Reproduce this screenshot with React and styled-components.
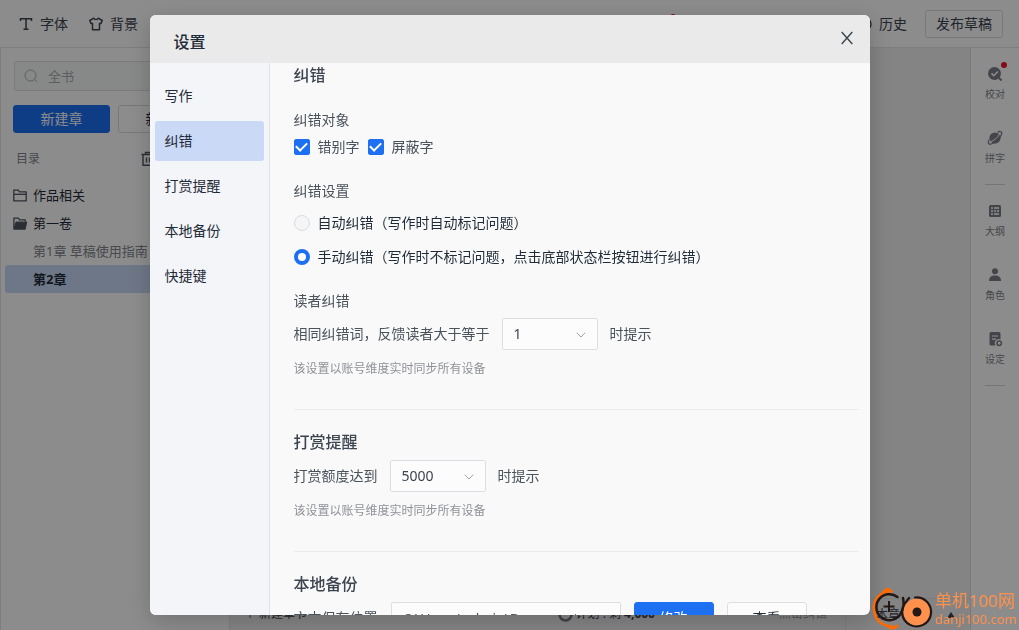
import React from 'react';
import styled, { createGlobalStyle } from 'styled-components';

const GlobalStyle = createGlobalStyle`
    * { box-sizing: border-box; }
    body {
        margin: 0;
        font-family: "Noto Sans", "Noto Sans CJK SC", sans-serif;
        font-size: 14px;
        line-height: 20px;
        color: #1f2b38;
        overflow: hidden;
    }
    button, input, select { font: inherit; color: inherit; margin: 0; }
    h1, h2, h3, p { margin: 0; }
`

const TrashIcon = () => (
    <svg width="14" height="16" viewBox="0 0 14 16" fill="none" stroke="currentColor" strokeWidth="1.4">
        <path d="M.5 3.5h13M4.500 3.5V1.5h5v2M2 3.5V14.3h10V3.5M5.500 6.5v5M8.500 6.5v5" />
    </svg>
)

const FolderIcon = ({ open }) => (
    <svg width="14" height="13" viewBox="0 0 14 13" fill="none" stroke="currentColor" strokeWidth="1.3" strokeLinejoin="round">
        {open
            ? <><path d="M.9 11.5V1.2h4.4l1.3 1.7h5.6v1.6" /><path d="M.9 12 3.2 5.2h10.4L12 12Z" fill="currentColor" /></>
            : <><path d="M.8 1.2h4.4l1.3 1.7h6.7v9H.8Z" /><path d="M.8 5.3h12.4" /></>}
    </svg>
)

const CheckLensIcon = () => (
    <svg width="18" height="18" viewBox="0 0 18 18" fill="currentColor">
        <circle cx="8.5" cy="8.5" r="6.5" />
        <path d="m12.5 12.5 3 3" stroke="currentColor" strokeWidth="2" />
        <path d="m5.5 8.4 2.3 2.3 4-4.2" fill="none" stroke="#fff" strokeWidth="1.6" />
    </svg>
)

const PlanetIcon = () => (
    <svg width="18" height="18" viewBox="0 0 18 18" fill="none" stroke="currentColor" strokeWidth="1.3">
        <circle cx="9" cy="9" r="5.6" fill="currentColor" stroke="none" />
        <path d="M3.2 10.5C1.6 13 2 15.5 4.5 15.2 8.5 14.6 15.6 8 15.8 3.8 15.6 2 13 2.4 11.5 3.2" />
        <path d="M4.5 12.5C8 11.8 12.5 8 13.6 4.8" stroke="#fff" strokeWidth="1" />
    </svg>
)

const TableIcon = () => (
    <svg width="18" height="18" viewBox="0 0 18 18">
        <rect x="3" y="3" width="12" height="12" rx="1.5" fill="currentColor" />
        <path d="M5 5h2v2H5ZM8 5h5v2H8ZM5 8h2v2H5ZM8 8h2v2H8ZM11 8h2v2h-2ZM5 11h2v2H5ZM8 11h5v2H8Z" fill="#fff" fillOpacity=".8" />
    </svg>
)

const PersonIcon = () => (
    <svg width="18" height="18" viewBox="0 0 18 18" fill="currentColor">
        <circle cx="9" cy="5.3" r="3" />
        <path d="M3 15c0-4 2.5-5.5 6-5.5s6 1.5 6 5.5Z" />
    </svg>
)

const DocIcon = () => (
    <svg width="18" height="18" viewBox="0 0 18 18">
        <path d="M5 2h8a1.5 1.5 0 0 1 1.5 1.5V9.5A4 4 0 0 0 9.6 15.5H5A1.5 1.5 0 0 1 3.5 14V3.5A1.5 1.5 0 0 1 5 2Z" fill="currentColor" />
        <path d="M6 6h6M6 9.2h4" stroke="#fff" strokeWidth="1.2" />
        <circle cx="13.2" cy="13.2" r="2.2" fill="none" stroke="currentColor" strokeWidth="1.5" />
    </svg>
)

const chapters = [
    { name: '作品相关', icon: <FolderIcon /> },
    { name: '第一卷', icon: <FolderIcon open /> },
    { name: '第1章 草稿使用指南', muted: true },
    { name: '第2章', active: true },
]

const tools = [
    { name: '校对', icon: <CheckLensIcon />, dot: true },
    { name: '拼字', icon: <PlanetIcon />, divider: true },
    { name: '大纲', icon: <TableIcon /> },
    { name: '角色', icon: <PersonIcon /> },
    { name: '设定', icon: <DocIcon />, divider: true },
]

const tabs = ['写作', '纠错', '打赏提醒', '本地备份', '快捷键']

function Editor() {
    return (
        <Page>
            <TopBar>
                <ToolButton>
                    <svg width="14" height="14" viewBox="0 0 14 14" fill="none" stroke="currentColor" strokeWidth="1.5">
                        <path d="M1.5 4V1.7h11V4M7 1.7v10.6M4.5 12.3h5" />
                    </svg>
                    字体
                </ToolButton>
                <ToolButton>
                    <svg width="14" height="14" viewBox="0 0 14 14" fill="none" stroke="currentColor" strokeWidth="1.5" strokeLinejoin="round">
                        <path d="M4.8 1.2C5.5 3 8.5 3 9.2 1.2L13.2 3.5 12 6.5H10.5V12.8H3.5V6.5H2L.8 3.5Z" />
                    </svg>
                    背景
                </ToolButton>
                <BarEnd>
                    <NoticeButton aria-label="消息"><Dot /></NoticeButton>
                    <ToolButton>
                        <svg width="14" height="14" viewBox="0 0 14 14" fill="none" stroke="currentColor" strokeWidth="1.4">
                            <circle cx="7" cy="7" r="6" />
                            <path d="M7 3.5V7.5h3" />
                        </svg>
                        历史
                    </ToolButton>
                    <PublishButton>发布草稿</PublishButton>
                </BarEnd>
            </TopBar>
            <Body>
                <Sidebar>
                    <SearchBox>
                        <svg width="14" height="14" viewBox="0 0 14 14" fill="none" stroke="currentColor">
                            <circle cx="6.5" cy="6.5" r="5.5" />
                            <path d="m10.5 10.5 2.5 2.5" />
                        </svg>
                        <SearchInput aria-label="搜索" placeholder="全书" />
                    </SearchBox>
                    <ButtonPair>
                        <NewButton $primary>新建章</NewButton>
                        <NewButton>新建卷</NewButton>
                    </ButtonPair>
                    <ListHead>
                        目录
                        <TrashButton aria-label="回收站"><TrashIcon /></TrashButton>
                    </ListHead>
                    <Tree>
                        {chapters.map(c => (
                            <TreeItem key={c.name} $active={c.active} $muted={c.muted}>
                                <TreeIcon>{c.icon}</TreeIcon>
                                {c.name}
                            </TreeItem>
                        ))}
                    </Tree>
                </Sidebar>
                <Center>
                    <Canvas />
                    <StatusBar>
                        <span>＋ 新建章节</span>
                        <Plan>
                            <svg width="15" height="15" viewBox="0 0 15 15" fill="none" stroke="#777b84" strokeWidth="2.5">
                                <circle cx="7.5" cy="7.5" r="6" />
                            </svg>
                            <span>计划 : 剩 <b>4,000</b></span>
                        </Plan>
                        <Faint>点击纠错</Faint>
                        <WordCount>
                            本章
                            <svg width="8" height="6" viewBox="0 0 8 6" fill="currentColor"><path d="M4 0l4 6H0Z" /></svg>
                        </WordCount>
                    </StatusBar>
                </Center>
                <Rail>
                    {tools.map(t => (
                        <React.Fragment key={t.name}>
                            <RailButton>
                                <RailIcon>{t.icon}{t.dot && <Dot />}</RailIcon>
                                {t.name}
                            </RailButton>
                            {t.divider && <RailLine />}
                        </React.Fragment>
                    ))}
                </Rail>
            </Body>
        </Page>
    )
}

function SettingsDialog() {
    return (
        <Dialog role="dialog" aria-labelledby="dialog-title">
            <DialogHead>
                <Title id="dialog-title">设置</Title>
                <CloseButton aria-label="关闭">
                    <svg width="12" height="14" viewBox="0 0 12 14" fill="none" stroke="currentColor" strokeWidth="1.4">
                        <path d="M.7 1 11.3 13M11.3 1 .7 13" />
                    </svg>
                </CloseButton>
            </DialogHead>
            <DialogBody>
                <TabList>
                    {tabs.map(t => <Tab key={t} $active={t === '纠错'}>{t}</Tab>)}
                </TabList>
                <Pane>
                    <Section $first>
                        <Heading>纠错</Heading>
                        <Group>
                            <SubHeading>纠错对象</SubHeading>
                            <Checks>
                                <Option><Check type="checkbox" defaultChecked />错别字</Option>
                                <Option><Check type="checkbox" defaultChecked />屏蔽字</Option>
                            </Checks>
                        </Group>
                        <Group>
                            <SubHeading>纠错设置</SubHeading>
                            <Radios>
                                <Option $dark><Radio type="radio" name="mode" />自动纠错（写作时自动标记问题）</Option>
                                <Option $dark><Radio type="radio" name="mode" defaultChecked />手动纠错（写作时不标记问题，点击底部状态栏按钮进行纠错）</Option>
                            </Radios>
                        </Group>
                        <Group>
                            <SubHeading>读者纠错</SubHeading>
                            <Row>
                                <label htmlFor="readers">相同纠错词，反馈读者大于等于</label>
                                <NumberSelect id="readers" options={['1', '2', '3']} />
                                <span>时提示</span>
                            </Row>
                            <Hint>该设置以账号维度实时同步所有设备</Hint>
                        </Group>
                    </Section>
                    <Section>
                        <Heading>打赏提醒</Heading>
                        <Row>
                            <label htmlFor="reward">打赏额度达到</label>
                            <NumberSelect id="reward" options={['5000', '10000']} />
                            <span>时提示</span>
                        </Row>
                        <Hint>该设置以账号维度实时同步所有设备</Hint>
                    </Section>
                    <Section>
                        <Heading>本地备份</Heading>
                        <Row $wide>
                            <label htmlFor="path">文本保存位置</label>
                            <PathInput id="path" defaultValue="C:\Users\admin\Documents" />
                            <ActionButton $primary>修改</ActionButton>
                            <ActionButton>查看</ActionButton>
                        </Row>
                    </Section>
                </Pane>
            </DialogBody>
        </Dialog>
    )
}

const NumberSelect = ({ id, options }) => (
    <SelectWrap>
        <Select id={id}>
            {options.map(o => <option key={o}>{o}</option>)}
        </Select>
        <Arrow width="10" height="6" viewBox="0 0 10 6" fill="none" stroke="#999ea5">
            <path d="M.8.7 5 5 9.2.7" />
        </Arrow>
    </SelectWrap>
)

const SiteMark = () => (
    <Mark>
        <svg width="62" height="42" viewBox="0 0 62 42" fill="none">
            <path d="M16 3.5C7 5 1.8 12 1.8 20c0 10 6 17.5 18 18.5" stroke="#ff6a00" strokeWidth="2.5" strokeLinecap="round" />
            <path d="M12 4Q15-1 19 3.5M16 38q4 4 9 0" stroke="#ff6a00" strokeWidth="3" strokeLinecap="round" />
            <path d="M25.500 9A13 13 0 1 0 29 25Q33 19 31 10" stroke="#231815" strokeWidth="2.5" strokeLinecap="round" />
            <path d="M17 13v11M11.5 18.5h11" stroke="#231815" strokeWidth="2" />
            <circle cx="45" cy="24" r="13.5" fill="#ff914d" />
            <path d="M43 9.5A14.5 14.5 0 1 1 34 14L37 10" stroke="#231815" strokeWidth="2.2" strokeLinecap="round" />
            <circle cx="45" cy="24" r="4.5" fill="#231815" />
        </svg>
        <MarkText>
            <MarkName>单机100网</MarkName>
            <MarkUrl>danji100.com</MarkUrl>
        </MarkText>
    </Mark>
)

export default function App() {
    return (
        <>
            <GlobalStyle />
            <Editor />
            <Overlay>
                <SettingsDialog />
            </Overlay>
            <SiteMark />
        </>
    )
}

const Page = styled.div`
    height: 100vh;
    display: flex;
    flex-direction: column;
    background-color: #ffffff;
`
const TopBar = styled.header`
    height: 48px;
    display: flex;
    align-items: center;
    gap: 21px;
    padding: 0 16px 0 19px;
    border-bottom: 1px solid #e6e6e6;
`
const ToolButton = styled.button`
    display: flex;
    align-items: center;
    gap: 7px;
    padding: 0;
    border: none;
    background: none;
    color: #3c4450;
`
const BarEnd = styled.div`
    display: flex;
    align-items: center;
    gap: 18px;
    margin-left: auto;
`
const NoticeButton = styled.button`
    position: relative;
    width: 20px;
    height: 20px;
    margin-right: 164px;
    padding: 0;
    border: none;
    background: none;
`
const Dot = styled.i`
    position: absolute;
    top: 0;
    right: 0;
    width: 6px;
    height: 6px;
    border-radius: 50%;
    background-color: #f0142f;
`
const PublishButton = styled.button`
    height: 28px;
    padding: 0 10px;
    border: 1px solid #d9dbde;
    border-radius: 3px;
    background: none;
    color: #3c4450;
`
const Body = styled.div`
    flex: 1;
    min-height: 0;
    display: flex;
`
const Sidebar = styled.aside`
    width: 230px;
    padding-top: 13px;
    border-left: 1px solid #e6e6e6;
    border-right: 1px solid #e6e6e6;
`
const SearchBox = styled.div`
    height: 30px;
    margin: 0 13px;
    padding: 0 9px;
    display: flex;
    align-items: center;
    gap: 10px;
    border: 1px solid #dcdfe2;
    border-radius: 3px;
    background-color: #f6f9f9;
    color: #a6a9ad;
`
const SearchInput = styled.input`
    flex: 1;
    min-width: 0;
    padding: 0;
    border: none;
    background: none;
    outline: none;
    font-size: 13px;
    &::placeholder {
        color: #a6a9ad;
    }
`
const ButtonPair = styled.div`
    display: grid;
    grid-template-columns: 1fr 1fr;
    gap: 8px;
    margin: 14px 14px 0 12px;
`
const NewButton = styled.button`
    height: 28px;
    padding: 0;
    border: 1px solid ${p => p.$primary ? '#1d70f2' : '#d9dbde'};
    border-radius: 3px;
    background-color: ${p => p.$primary ? '#1d70f2' : '#ffffff'};
    color: ${p => p.$primary ? '#ffffff' : '#1f2b38'};
`
const ListHead = styled.div`
    display: flex;
    align-items: center;
    justify-content: space-between;
    margin: 16px 74px 12px 15px;
    font-size: 12px;
    color: #80858c;
`
const TrashButton = styled.button`
    display: flex;
    padding: 0;
    border: none;
    background: none;
    color: #4f5661;
`
const Tree = styled.ul`
    margin: 0;
    padding: 0 4px;
    list-style: none;
`
const TreeItem = styled.li`
    height: 28px;
    display: flex;
    align-items: center;
    gap: 6px;
    padding-left: 8px;
    border-radius: 3px;
    font-size: 13px;
    font-weight: ${p => p.$active ? 'bold' : 'normal'};
    color: ${p => p.$muted ? '#80858c' : '#1f2b38'};
    background-color: ${p => p.$active ? '#c9d9f6' : 'transparent'};
`
const TreeIcon = styled.span`
    width: 14px;
    display: flex;
    color: #4f5661;
`
const Center = styled.main`
    flex: 1;
    min-width: 0;
    display: flex;
    flex-direction: column;
    background-color: #f0f0f0;
`
const Canvas = styled.div`
    flex: 1;
`
const StatusBar = styled.footer`
    height: 32px;
    display: flex;
    align-items: center;
    padding-left: 14px;
    font-size: 12px;
    color: #3c4450;
`
const Plan = styled.div`
    display: flex;
    align-items: center;
    gap: 3px;
    margin-left: auto;
`
const Faint = styled.span`
    margin-left: 124px;
    color: #999ea5;
`
const WordCount = styled.div`
    height: 32px;
    width: 125px;
    display: flex;
    align-items: center;
    justify-content: space-between;
    margin-left: 18px;
    padding: 0 15px 0 30px;
    border: 1px solid #e3e3e3;
    border-width: 1px 0 0 1px;
`
const Rail = styled.aside`
    width: 49px;
    display: flex;
    flex-direction: column;
    align-items: center;
    padding-top: 3px;
    border-left: 1px solid #dedede;
`
const RailButton = styled.button`
    height: 64px;
    display: flex;
    flex-direction: column;
    align-items: center;
    justify-content: center;
    gap: 4px;
    padding: 0;
    border: none;
    background: none;
    font-size: 10px;
    line-height: 14px;
    color: #80858c;
`
const RailIcon = styled.span`
    position: relative;
    display: flex;
    color: #7b7f88;
    > ${Dot} {
        top: -3px;
        right: -3px;
    }
`
const RailLine = styled.hr`
    width: 20px;
    margin: 5px 0 3px;
    border: none;
    border-top: 1px solid #d5d6d8;
`
const Overlay = styled.div`
    position: fixed;
    inset: 0;
    display: flex;
    align-items: center;
    justify-content: center;
    padding: 15px 0;
    background-color: rgba(0, 0, 0, 0.45);
`
const Dialog = styled.section`
    width: 720px;
    max-width: 100%;
    height: 100%;
    max-height: 600px;
    display: flex;
    flex-direction: column;
    border-radius: 6px;
    overflow: hidden;
    background-color: #f9f9f9;
    box-shadow: 0 6px 24px rgba(0, 0, 0, 0.2);
`
const DialogHead = styled.header`
    height: 48px;
    flex-shrink: 0;
    display: flex;
    align-items: center;
    justify-content: space-between;
    padding: 6px 17px 0 24px;
    background-color: #eaeaea;
`
const Title = styled.h1`
    font-size: 16px;
    font-weight: 500;
`
const CloseButton = styled.button`
    display: flex;
    margin-bottom: 8px;
    padding: 0;
    border: none;
    background: none;
    color: #3c4450;
`
const DialogBody = styled.div`
    flex: 1;
    min-height: 0;
    display: flex;
`
const TabList = styled.nav`
    width: 120px;
    flex-shrink: 0;
    display: flex;
    flex-direction: column;
    gap: 5px;
    padding: 13px 5px;
    border-right: 1px solid #e0e1e5;
    background-color: #f4f5f8;
`
const Tab = styled.button`
    height: 40px;
    padding: 0 10px;
    border: none;
    border-radius: 3px;
    background-color: ${p => p.$active ? '#c9d9f6' : 'transparent'};
    text-align: left;
`
const Pane = styled.div`
    flex: 1;
    padding: 0 11px 0 24px;
    overflow: hidden;
    color: #4a525c;
`
const Section = styled.section`
    padding: ${p => p.$first ? '1px' : '21px'} 0 30px;
    border-top: ${p => p.$first ? 'none' : '1px solid #ececec'};
`
const Heading = styled.h2`
    margin-bottom: 7px;
    font-size: 16px;
    line-height: 22px;
    font-weight: 500;
    color: #3c4450;
`
const Group = styled.div`
    margin-top: 24px;
`
const SubHeading = styled.h3`
    font-size: 14px;
    font-weight: normal;
    margin-bottom: 7px;
`
const Checks = styled.div`
    display: flex;
    gap: 8px;
`
const Radios = styled.div`
    display: flex;
    flex-direction: column;
    align-items: flex-start;
    gap: 14px;
    padding-top: 5px;
`
const Option = styled.label`
    display: flex;
    align-items: center;
    gap: 8px;
    color: ${p => p.$dark ? '#1f2b38' : 'inherit'};
`
const Check = styled.input`
    appearance: none;
    width: 16px;
    height: 16px;
    display: grid;
    place-items: center;
    border: 1px solid #d9dbde;
    border-radius: 2px;
    &:checked {
        border-color: #1d70f2;
        background-color: #1d70f2;
    }
    &:checked::after {
        content: "";
        width: 9px;
        height: 5px;
        margin-bottom: 3px;
        border: solid #ffffff;
        border-width: 0 0 2px 2px;
        transform: rotate(-45deg);
    }
`
const Radio = styled.input`
    appearance: none;
    width: 16px;
    height: 16px;
    border: 1px solid #d9dbde;
    border-radius: 50%;
    background-color: #f4f5f6;
    &:checked {
        border: 4px solid #1d70f2;
        background-color: #ffffff;
    }
`
const Row = styled.div`
    display: flex;
    align-items: center;
    gap: ${p => p.$wide ? '13px' : '12px'};
    white-space: nowrap;
`
const SelectWrap = styled.span`
    position: relative;
    display: flex;
`
const Select = styled.select`
    appearance: none;
    width: 96px;
    height: 32px;
    padding: 0 11px;
    border: 1px solid #dcdee1;
    border-radius: 2px;
    background-color: #fcfcfc;
    color: #3c4450;
`
const Arrow = styled.svg`
    position: absolute;
    right: 12px;
    top: 14px;
    pointer-events: none;
`
const PathInput = styled.input`
    width: 230px;
    height: 32px;
    padding: 0 11px;
    border: 1px solid #dcdee1;
    border-radius: 2px;
    background-color: #fcfcfc;
`
const ActionButton = styled.button`
    width: 80px;
    height: 32px;
    padding: 0;
    border: 1px solid ${p => p.$primary ? '#1d70f2' : '#dcdee1'};
    border-radius: 3px;
    background-color: ${p => p.$primary ? '#1d70f2' : '#fcfcfc'};
    color: ${p => p.$primary ? '#ffffff' : '#1f2b38'};
`
const Hint = styled.p`
    margin-top: 9px;
    font-size: 12px;
    color: #8e9298;
`
const Mark = styled.div`
    position: fixed;
    right: 2px;
    bottom: 0;
    display: flex;
    align-items: center;
    gap: 1px;
    color: #ff914d;
`
const MarkText = styled.div`
    display: flex;
    flex-direction: column;
`
const MarkName = styled.span`
    font-size: 17px;
`
const MarkUrl = styled.span`
    font-size: 13px;
    line-height: 16px;
`
